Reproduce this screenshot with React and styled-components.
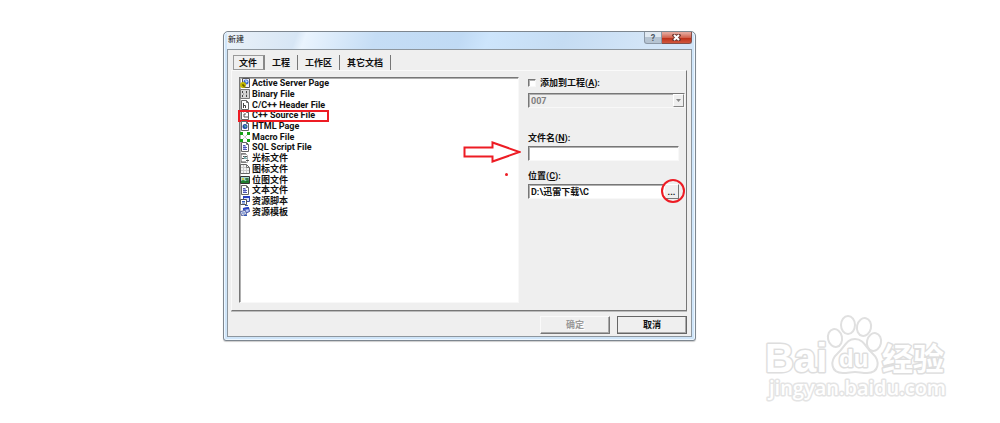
import React from 'react';
import styled, { createGlobalStyle, css } from 'styled-components';

const files = [
  ['asp', 'Active Server Page'],
  ['binary', 'Binary File'],
  ['header', 'C/C++ Header File'],
  ['source', 'C++ Source File'],
  ['html', 'HTML Page'],
  ['macro', 'Macro File'],
  ['text', 'SQL Script File'],
  ['cursor', '光标文件'],
  ['icon', '图标文件'],
  ['bitmap', '位图文件'],
  ['text', '文本文件'],
  ['script', '资源脚本'],
  ['template', '资源模板'],
];

const tabs = ['文件', '工程', '工作区', '其它文档'];

function Sheet({ children }) {
  return (
    <>
      <path d="M1.5 .5h5l2 2v7h-7z" fill="#fff" stroke="#666" />
      <path d="M6.5 .5v2h2" fill="none" stroke="#666" />
      {children}
    </>
  );
}

const drawings = {
  asp: (
    <>
      <path d="M2.5 .5h7v9h-7z" fill="#eef" stroke="#555" />
      <circle cx="6" cy="4" r="2.5" fill="#3a68c8" />
      <path d="M5 2l3 1-2 2z" fill="#c8e0ff" />
      <circle cx="3" cy="7" r="3" fill="#c4b800" />
      <path d="M2 7h2v2" fill="none" stroke="#423f00" />
    </>
  ),
  binary: (
    <>
      <path d="M.5 .5h9v9h-9z" fill="#d5d5d5" stroke="#777" />
      <path d="M2 3h2M6 3h2M2 7h2M6 7h2" stroke="#444" strokeWidth="2" strokeDasharray="1 1" />
      <path d="M3 5h1M6 5h1" stroke="#777" />
    </>
  ),
  header: (
    <Sheet>
      <path d="M3.5 3v5M3.500 5.5h2V8" fill="none" stroke="#444" />
    </Sheet>
  ),
  source: (
    <Sheet>
      <path d="M6 4H4v3h2M6 7h2" fill="none" stroke="#555" />
      <path d="M3 2h1" stroke="#888" />
    </Sheet>
  ),
  html: (
    <Sheet>
      <circle cx="5" cy="5.5" r="2.5" fill="#2448a8" />
      <path d="M4 4l3 1-2 2z" fill="#58b8a0" />
    </Sheet>
  ),
  macro: (
    <>
      <path d="M2 2l6 6M2 8l6-6" stroke="#999" strokeDasharray="1 1" />
      <path d="M0 0h3v3H0zM7 0h3v3H7zM0 7h3v3H0zM7 7h3v3H7z" fill="#16a016" />
    </>
  ),
  text: (
    <Sheet>
      <path d="M3 3h3v5H3z" fill="#a8b0ec" />
      <path d="M3 3.5h2M3 5.5h4M3 7.5h4" stroke="#5058b0" />
    </Sheet>
  ),
  cursor: (
    <>
      <path d="M1.5 .5h4l2 2v7h-6z" fill="#fff" stroke="#aaa" />
      <path d="M1 1h5M3 3.5h4M2 5.5h3M6 7.5h3M1 9h5" stroke="#555" />
      <path d="M4 3l4 3H4z" fill="#7ab0b0" />
    </>
  ),
  icon: (
    <>
      <path d="M.5 .5h6l3 3v6h-9z" fill="#f4f4f4" stroke="#666" />
      <path d="M3.5 1v8M6.5 1v8M1 3.5h8M1 6.5h8" stroke="#ccc" />
      <path d="M6.5 .5v3h3" fill="none" stroke="#777" />
    </>
  ),
  bitmap: (
    <>
      <path d="M.5 1.5h9v7h-9z" fill="#a8d8d0" stroke="#333" />
      <path d="M1 6l2-1 3 1 3-1v3H1z" fill="#208030" />
      <circle cx="3" cy="4" r="1" fill="#d8c820" />
      <path d="M7 3v4M5 4h4" stroke="#125820" />
    </>
  ),
  script: (
    <>
      <path d="M3.5 .5h6v5h-6z" fill="#d8e4ff" stroke="#3848a0" />
      <path d="M3 1h7" stroke="#2840c0" strokeWidth="2" />
      <path d="M.5 3.5h6v5h-6z" fill="#fff" stroke="#555" />
      <path d="M2 5.5h3M2 7h3M5 9.5h3" stroke="#3058b8" />
    </>
  ),
  template: (
    <>
      <path d="M3.5 1.5l5-1 1 4-5 2z" fill="#c0d0ff" stroke="#3848a0" />
      <path d="M3 2l6-1" stroke="#2840c0" strokeWidth="2" />
      <path d="M.5 4.5l5-1 1 4-5 1z" fill="#fff" stroke="#4858a0" />
      <path d="M2 6h3M4 8.5h3" stroke="#3058b8" />
    </>
  ),
};

function Watermark() {
  return (
    <Brand viewBox="0 0 192 94" width="192" height="94">
      <g fill="#fff" stroke="#e0e0e0" strokeWidth="2">
        <ellipse cx="75" cy="26" rx="7" ry="9" transform="rotate(-12 75 26)" />
        <ellipse cx="88" cy="13" rx="7" ry="9" />
        <ellipse cx="104" cy="15" rx="7" ry="9" transform="rotate(12 104 15)" />
        <ellipse cx="114" cy="30" rx="7" ry="9" transform="rotate(12 114 30)" />
        <path d="M95 27c-9 0-10 8-17 14-9 8-7 20 5 20 5 0 8-1 12-1s7 1 12 1c12 0 14-12 5-20-6-5-8-14-17-14z" />
      </g>
      <g fill="#fff" stroke="#dedede" strokeWidth="3" paintOrder="stroke" strokeLinejoin="round">
        <LogoText x="5" y="60" fontSize="40">Bai</LogoText>
        <LogoText x="79" y="55" fontSize="24">du</LogoText>
        <LogoText x="122" y="58" fontSize="31">经验</LogoText>
      </g>
      <g fill="#fff" stroke="#e4e4e4" strokeWidth="3" paintOrder="stroke" strokeLinejoin="round">
        <SiteText x="9" y="83" fontSize="20">jingyan.baidu.com</SiteText>
      </g>
    </Brand>
  );
}

export default function App() {
  return (
    <Page>
      <GlobalStyle />
      <Dialog>
        <TitleBar>
          <Title>新建</Title>
          <HelpButton aria-label="Help">?</HelpButton>
          <CloseButton aria-label="Close">
            <svg width="9" height="7" viewBox="0 0 9 7">
              <path d="M1 0l7 7M8 0L1 7" stroke="#713630" strokeWidth="4" />
              <path d="M2 1l5 5M7 1L2 6" stroke="#fff" strokeWidth="2" />
            </svg>
          </CloseButton>
        </TitleBar>
        <Client>
          <Tabs>
            {tabs.map((tab, i) => (
              <Tab key={tab} $active={i === 0}>
                {tab}
              </Tab>
            ))}
          </Tabs>
          <Panel>
            <FileList>
              {files.map(([icon, name]) => (
                <FileRow key={name}>
                  <svg width="10" height="10" viewBox="0 0 10 10">
                    {drawings[icon]}
                  </svg>
                  {name}
                  {icon === 'source' && <RedBox />}
                </FileRow>
              ))}
            </FileList>
            <Form>
              <CheckLabel>
                <Checkbox type="checkbox" />
                <span>
                  添加到工程(<u>A</u>):
                </span>
              </CheckLabel>
              <SelectFrame>
                <Select aria-label="工程" disabled>
                  <option>007</option>
                </Select>
                <DropMark>
                  <svg width="5" height="3" viewBox="0 0 5 3">
                    <path d="M0 0h5L2.5 3z" fill="#888" />
                  </svg>
                </DropMark>
              </SelectFrame>
              <Field>
                <label htmlFor="name">
                  文件名(<u>N</u>):
                </label>
                <InputRow>
                  <Input id="name" />
                  <Arrow width="58" height="22" viewBox="0 0 58 22">
                    <path d="M1.5 6.500h28v-5l27 9.500-27 9.500v-5h-28z" />
                  </Arrow>
                  <RedDot />
                </InputRow>
              </Field>
              <Field>
                <label htmlFor="path">
                  位置(<u>C</u>):
                </label>
                <InputRow>
                  <Input id="path" defaultValue="D:\迅雷下载\C" />
                  <BrowseButton>
                    ...
                    <RedCircle />
                  </BrowseButton>
                </InputRow>
              </Field>
            </Form>
          </Panel>
          <Footer>
            <Button disabled>确定</Button>
            <Button $primary>取消</Button>
          </Footer>
        </Client>
      </Dialog>
      <Watermark />
    </Page>
  );
}

// styled components:

const GlobalStyle = createGlobalStyle`
  * {
    box-sizing: border-box;
  }
  body {
    margin: 0;
    background: #fff;
  }
  body, button, input, select {
    font: bold 9px/12px Roboto, 'Noto Sans CJK SC', sans-serif;
    color: #111;
  }
  button, input, select {
    margin: 0;
    padding: 0;
    border-radius: 0;
  }
`;

const red = '#ed1c24';

const sunken = css`
  background: #fff;
  border: 1px solid;
  border-color: #777 #f8f8f8 #f8f8f8 #777;
  box-shadow: inset 1px 1px #b0b0b0;
`;

const Page = styled.main`
  display: grid;
  grid-template-columns: 223fr 473fr 304fr;
  padding-top: 31px;
`;

const Dialog = styled.section`
  grid-column: 2;
  align-self: start;
  padding: 0 3px 3px;
  border: 1px solid #7d868f;
  border-radius: 5px 5px 3px 3px;
  background: #cfe5f9;
  box-shadow: inset 0 0 0 1px #eef7ff, 0 1px 1px #ccc;
`;

const TitleBar = styled.header`
  display: flex;
  align-items: flex-start;
  height: 17px;
  background: linear-gradient(110deg, #eaf1f8 0%, #d7e6f5 15%, #eaf4fe 17%, #c5ddf5 32%, #c0daf4 50%, #cde5fc 56%, #c5dcf3 72%, #d3e5f7 90%);
`;

const Title = styled.h1`
  flex: 1;
  margin: 0;
  padding: 2px 1px;
  font-size: 8px;
  font-weight: normal;
`;

const HelpButton = styled.button`
  width: 18px;
  height: 12px;
  border: 1px solid #8b97a5;
  border-top: 0;
  border-radius: 0 0 0 3px;
  background: linear-gradient(#dfe8f1 45%, #b6c4d2 50%);
  color: #4d5967;
  line-height: 10px;
`;

const CloseButton = styled.button`
  display: flex;
  align-items: center;
  justify-content: center;
  width: 30px;
  height: 12px;
  border: 1px solid #84504a;
  border-width: 0 1px 1px 0;
  border-radius: 0 0 3px 0;
  background: linear-gradient(#e3a498 10%, #d2624e 50%, #bd3019 55%, #d0563c);
`;

const Client = styled.div`
  padding: 5px 4px 2px 3px;
  border: 1px solid #8d969e;
  background: #efefef;
`;

const Tabs = styled.nav`
  display: flex;
  padding-left: 2px;
`;

const Tab = styled.button`
  height: 15px;
  padding: 0 7px;
  border: 0;
  border-right: 1px solid #777;
  background: none;
  ${(props) =>
    props.$active &&
    css`
      padding: 0 6px 0 5px;
      border: 1px solid #999;
      border-right: 2px solid #888;
    `}
`;

const Panel = styled.div`
  display: grid;
  grid-template-columns: 280fr 157fr;
  gap: 9px;
  padding: 6px 1px 7px 7px;
  border: 1px solid;
  border-color: #fafafa #777 #777 #fafafa;
  box-shadow: 0 1px #bbb;
`;

const FileList = styled.ul`
  ${sunken}
  display: grid;
  grid-template-rows: repeat(13, 1fr);
  margin: 0;
  padding: 0 0 85px;
  height: 226px;
  list-style: none;
`;

const FileRow = styled.li`
  position: relative;
  display: flex;
  align-items: center;
  gap: 2px;
  min-height: 0;
  line-height: 10px;
`;

const RedBox = styled.i`
  position: absolute;
  left: -2px;
  top: 0;
  width: 91px;
  height: 12px;
  border: 2px solid ${red};
`;

const Form = styled.form`
  display: flex;
  flex-direction: column;
`;

const CheckLabel = styled.label`
  display: flex;
  align-items: center;
  gap: 4px;
  height: 12px;
  margin-bottom: 4px;
`;

const Checkbox = styled.input`
  ${sunken}
  appearance: none;
  width: 8px;
  height: 8px;
`;

const SelectFrame = styled.div`
  ${sunken}
  display: flex;
  height: 15px;
  margin-bottom: 24px;
  background: #efefef;
`;

const Select = styled.select`
  flex: 1;
  padding-left: 2px;
  border: 0;
  background: none;
  appearance: none;
  &:disabled {
    color: #808080;
    opacity: 1;
  }
`;

const DropMark = styled.span`
  display: flex;
  align-items: center;
  justify-content: center;
  width: 11px;
  border: 1px solid;
  border-color: #fff #888 #888 #fff;
`;

const Field = styled.div`
  display: flex;
  flex-direction: column;
  gap: 2px;
  margin: 0 6px 9px 0;
`;

const InputRow = styled.div`
  position: relative;
  display: flex;
  height: 15px;
`;

const Input = styled.input`
  ${sunken}
  flex: 1;
  min-width: 0;
  padding: 0 2px;
`;

const BrowseButton = styled.button`
  position: relative;
  width: 15px;
  border: 1px solid;
  border-color: #fff #777 #777 #fff;
  background: #efefef;
`;

const Arrow = styled.svg`
  position: absolute;
  left: -65px;
  top: -5px;
  fill: #fff;
  stroke: ${red};
  stroke-width: 2;
`;

const RedDot = styled.i`
  position: absolute;
  left: -23px;
  top: 27px;
  width: 3px;
  height: 3px;
  border-radius: 50%;
  background: ${red};
`;

const RedCircle = styled.i`
  position: absolute;
  left: -4px;
  top: -6px;
  width: 24px;
  height: 24px;
  border: 2px solid ${red};
  border-radius: 50%;
`;

const Footer = styled.footer`
  display: flex;
  justify-content: flex-end;
  gap: 7px;
  padding-top: 5px;
`;

const Button = styled.button`
  width: 70px;
  height: 18px;
  border: 1px solid;
  border-color: #fafafa #777 #777 #fafafa;
  background: #efefef;
  box-shadow: inset -1px -1px #aaa;
  ${(props) => props.$primary && 'border-color: #666;'}
  &:disabled {
    color: #999;
    text-shadow: 1px 1px #fff;
  }
`;

const Brand = styled.svg`
  margin: 281px 0 0 64px;
`;

const LogoText = styled.text`
  font-family: 'Liberation Sans', 'Noto Sans CJK SC', sans-serif;
  font-weight: bold;
`;

const SiteText = styled.text`
  font-family: 'Open Sans', sans-serif;
  font-weight: 600;
`;
